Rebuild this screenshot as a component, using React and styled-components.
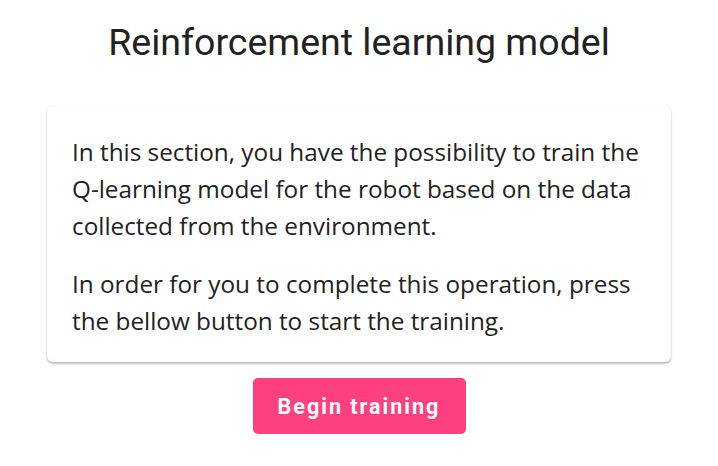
import React from "react";
import styled, { createGlobalStyle } from "styled-components";

const GlobalStyle = createGlobalStyle`
  body {
    margin: 0;
    background: #ffffff;
    font-family: "Open Sans", "Noto Sans", sans-serif;
  }
`;

const StyledPage = styled.div`
  display: flex;
  flex-direction: column;
  align-items: center;
  padding-top: 18px;
`;

const StyledTitle = styled.h1`
  margin: 0;
  font-family: Roboto, sans-serif;
  font-weight: 400;
  font-size: 37.5px;
  line-height: 48px;
  color: #222222;
`;

const StyledCard = styled.div`
  box-sizing: border-box;
  width: 624px;
  margin-top: 40px;
  padding: 27px 18px 2px 25px;
  background: #ffffff;
  border-radius: 6px;
  box-shadow: 0px 2px 2px rgba(0, 0, 0, 0.24), 0px 0px 3px rgba(0, 0, 0, 0.08);
`;

const StyledParagraph = styled.p`
  margin: 0 0 21px;
  font-size: 24.3px;
  line-height: 37px;
  color: #222222;
`;

const StyledButton = styled.button`
  margin-top: 16px;
  width: 213px;
  height: 56px;
  border: none;
  border-radius: 5px;
  background: #fe3f80;
  color: #ffffff;
  font-family: Roboto, sans-serif;
  font-weight: 700;
  font-size: 21.5px;
  letter-spacing: 2px;
  cursor: pointer;
`;

export default function App() {
  return (
    <>
      <GlobalStyle />
      <StyledPage>
        <StyledTitle>Reinforcement learning model</StyledTitle>
        <StyledCard>
          <StyledParagraph>
            In this section, you have the possibility to train the Q-learning
            model for the robot based on the data collected from the
            environment.
          </StyledParagraph>
          <StyledParagraph>
            In order for you to complete this operation, press the bellow
            button to start the training.
          </StyledParagraph>
        </StyledCard>
        <StyledButton>Begin training</StyledButton>
      </StyledPage>
    </>
  );
}
